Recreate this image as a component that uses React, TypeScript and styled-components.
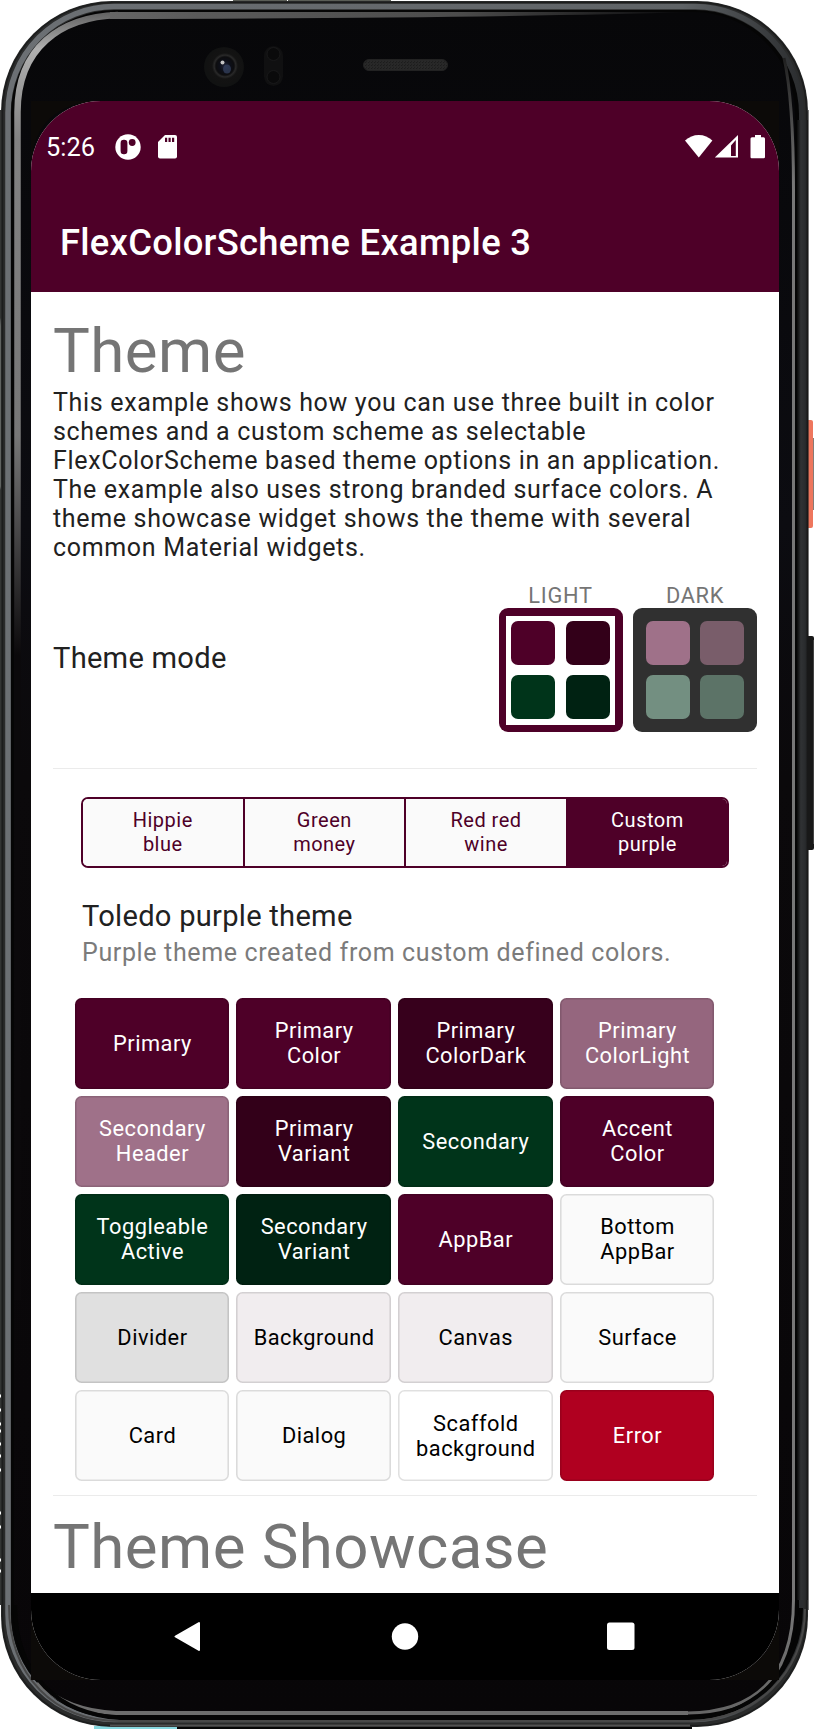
import React from "react";
import styled, { createGlobalStyle } from "styled-components";

const GlobalStyle = createGlobalStyle`
  * { box-sizing: border-box; }
  html, body { margin: 0; background: #fff; }
  body { font-family: Roboto, "Liberation Sans", sans-serif; overflow: hidden; }
`;

const Device = styled.main`
  position: relative;
  width: 815px;
  height: 1729px;
  padding: 101px 36px 49px 31px;
  overflow: hidden;
`;

const FrameArt = styled.svg`
  position: absolute;
  inset: 0;
`;

const Screen = styled.div`
  position: relative;
  display: flex;
  flex-direction: column;
  width: 748px;
  height: 1579px;
  border-radius: 70px;
  overflow: hidden;
  background: #fff;
`;

const TopBar = styled.header`
  height: 191px;
  flex: none;
  background: #4e0028;
  color: #fff;
`;

const StatusBar = styled.div`
  display: flex;
  align-items: center;
  justify-content: space-between;
  height: 91px;
  padding: 0 13px 0 15px;
`;

const StatusGroup = styled.div<{ $gap: number }>`
  display: flex;
  align-items: center;
  gap: ${(p) => p.$gap}px;
`;

const Clock = styled.span`
  width: 52px;
  padding-top: 1px;
  font-size: 25.4px;
  line-height: 30px;
  letter-spacing: 0;
  white-space: nowrap;
`;

const AppTitle = styled.h1`
  margin: 0;
  padding: 29px 0 0 29px;
  font-size: 36.4px;
  font-weight: 500;
  line-height: 44px;
  letter-spacing: 0.27px;
  white-space: nowrap;
`;

const Content = styled.section`
  flex: 1;
  padding: 20px 22px 0;
  overflow: hidden;
`;

const Headline = styled.h2<{ $top?: number }>`
  margin: ${(p) => p.$top ?? 0}px 0 0;
  height: 76px;
  padding-top: 1px;
  font-size: 61.8px;
  font-weight: 400;
  line-height: 76px;
  letter-spacing: 0.45px;
  color: #757575;
  white-space: nowrap;
`;

const Description = styled.p`
  margin: 0;
  font-size: 25px;
  line-height: 29px;
  letter-spacing: 0.67px;
  color: #212121;
  white-space: nowrap;
`;

const ModeRow = styled.div`
  display: flex;
  justify-content: space-between;
  align-items: center;
  height: 206px;
  padding-bottom: 15px;
`;

const Subtitle = styled.h3`
  margin: 0;
  font-size: 29.1px;
  font-weight: 400;
  line-height: 36px;
  letter-spacing: 0.27px;
  color: #212121;
  white-space: nowrap;
`;

const ModeOptions = styled.div`
  display: flex;
  gap: 10.5px;
`;

const ModeOption = styled.div`
  display: flex;
  flex-direction: column;
  align-items: center;
`;

const ModeLabel = styled.span`
  height: 25px;
  font-size: 21.8px;
  line-height: 25px;
  letter-spacing: 0.7px;
  color: #757575;
`;

const Swatches = styled.div<{ $surface: string; $outline: string }>`
  display: grid;
  grid-template-columns: 44px 44px;
  grid-template-rows: 44px 44px;
  place-content: center;
  gap: 10.5px;
  width: 124px;
  height: 124px;
  border-radius: 9px;
  background: linear-gradient(${(p) => p.$surface}, ${(p) => p.$surface}) center / 109px 109px no-repeat
    ${(p) => p.$outline};
`;

const Swatch = styled.div<{ $color: string }>`
  border-radius: 7px;
  background: ${(p) => p.$color};
`;

const Divider = styled.hr<{ $top?: number }>`
  height: 1px;
  margin: ${(p) => p.$top ?? 0}px 0 0;
  border: 0;
  background: #ebebeb;
`;

const SegmentedControl = styled.div`
  display: grid;
  grid-template-columns: 159.5px 161.7px 161.7px 1fr;
  width: 648px;
  height: 71.500px;
  margin: 27.500px 0 0 28px;
  border: 2px solid #4e0028;
  border-radius: 7px;
  overflow: hidden;
`;

const Segment = styled.div<{ $selected?: boolean }>`
  display: flex;
  align-items: center;
  justify-content: center;
  padding-bottom: 1px;
  border-left: 2px solid #4e0028;
  background: ${(p) => (p.$selected ? "#4e0028" : "#fafafa")};
  color: ${(p) => (p.$selected ? "#fff" : "#4e0028")};
  font-size: 20px;
  line-height: 24px;
  letter-spacing: 0.5px;
  text-align: center;
  white-space: pre-line;
  &:first-child { border-left: 0; }
`;

const ThemeInfo = styled.div`
  height: 129.500px;
  padding: 30px 0 0 29px;
`;

const ThemeCaption = styled.p`
  margin: 2px 0 0;
  font-size: 25px;
  line-height: 34px;
  letter-spacing: 0.64px;
  color: #7b7b7b;
  white-space: nowrap;
`;

const Palette = styled.div`
  display: grid;
  grid-template-columns: repeat(4, 154.5px);
  grid-auto-rows: 91px;
  gap: 7.2px;
  padding-left: 21.7px;
`;

const ColorCard = styled.div<{ $color: string; $dark?: boolean }>`
  display: flex;
  align-items: center;
  justify-content: center;
  padding-left: 1px;
  border-radius: 6.5px;
  box-shadow: inset 0 0 0 1.6px rgba(0, 0, 0, 0.12);
  background: ${(p) => p.$color};
  color: ${(p) => (p.$dark ? "#fff" : "#000")};
  font-size: 21.8px;
  line-height: 25px;
  letter-spacing: 0.5px;
  text-align: center;
  white-space: pre-line;
`;

const NavBar = styled.nav`
  display: flex;
  flex: none;
  height: 87px;
  background: #000;
`;

const lightSwatches = ["#4e0028", "#330019", "#00341a", "#002212"];
const darkSwatches = ["#9f7189", "#795d6a", "#738f81", "#5c7367"];

const segments = ["Hippie\nblue", "Green\nmoney", "Red red\nwine", "Custom\npurple"];

const palette: Array<[string, string, boolean]> = [
  ["Primary", "#4e0028", true],
  ["Primary\nColor", "#4e0028", true],
  ["Primary\nColorDark", "#37001c", true],
  ["Primary\nColorLight", "#95667e", true],
  ["Secondary\nHeader", "#9f7189", true],
  ["Primary\nVariant", "#330019", true],
  ["Secondary", "#00341a", true],
  ["Accent\nColor", "#4e0028", true],
  ["Toggleable\nActive", "#00341a", true],
  ["Secondary\nVariant", "#002212", true],
  ["AppBar", "#4e0028", true],
  ["Bottom\nAppBar", "#fafafa", false],
  ["Divider", "#e0e0e0", false],
  ["Background", "#f1edef", false],
  ["Canvas", "#f1edef", false],
  ["Surface", "#fafafa", false],
  ["Card", "#fafafa", false],
  ["Dialog", "#fafafa", false],
  ["Scaffold\nbackground", "#ffffff", false],
  ["Error", "#b00020", true],
];

const PhoneFrame = () => (
  <FrameArt width="815" height="1729" viewBox="0 0 815 1729">
    <defs>
      <linearGradient id="metal" x1="0" y1="0" x2="1" y2="0">
        <stop offset="0" stopColor="#6c7074" />
        <stop offset="0.85" stopColor="#5f6366" />
        <stop offset="1" stopColor="#2b2d2f" />
      </linearGradient>
      <linearGradient id="glint" gradientUnits="userSpaceOnUse" x1="0" y1="10" x2="0" y2="1300">
        <stop offset="0" stopColor="#5c5c5c" />
        <stop offset="0.03" stopColor="#b0b0b0" />
        <stop offset="0.1" stopColor="#828282" />
        <stop offset="0.33" stopColor="#777" />
        <stop offset="0.5" stopColor="#0b090b" />
      </linearGradient>
      <linearGradient id="topGlint" x1="0" y1="0" x2="1" y2="0">
        <stop offset="0" stopColor="#666" />
        <stop offset="0.15" stopColor="#5a5a5a" />
        <stop offset="0.6" stopColor="#4c4c4c" />
        <stop offset="1" stopColor="#08080a" />
      </linearGradient>
      <linearGradient id="sideLine" gradientUnits="userSpaceOnUse" x1="0" y1="50" x2="0" y2="1700">
        <stop offset="0" stopColor="#1a1a1a" />
        <stop offset="0.08" stopColor="#777" />
        <stop offset="0.94" stopColor="#777" />
        <stop offset="1" stopColor="#666" />
      </linearGradient>
      <linearGradient id="rightMetal" x1="0" y1="0" x2="1" y2="0">
        <stop offset="0" stopColor="#0a0a0a" />
        <stop offset="0.35" stopColor="#303234" />
        <stop offset="0.75" stopColor="#292b2d" />
        <stop offset="1" stopColor="#141414" />
      </linearGradient>
      <linearGradient id="glass" x1="0" y1="0" x2="0" y2="1">
        <stop offset="0" stopColor="#070709" />
        <stop offset="0.3" stopColor="#0c0c11" />
        <stop offset="0.45" stopColor="#0b090b" />
        <stop offset="1" stopColor="#080608" />
      </linearGradient>
      <radialGradient id="lens">
        <stop offset="0" stopColor="#20253a" />
        <stop offset="0.3" stopColor="#0d0f18" />
        <stop offset="0.5" stopColor="#0d0d0f" />
        <stop offset="0.6" stopColor="#292929" />
        <stop offset="0.72" stopColor="#131313" />
        <stop offset="1" stopColor="#121212" />
      </radialGradient>
      <pattern id="mesh" width="3" height="3" patternUnits="userSpaceOnUse">
        <rect width="3" height="3" fill="#1c1c1c" />
        <path d="M0 0h1v3M2 1h1v1" stroke="#3a3a3a" strokeWidth="0.8" />
      </pattern>
    </defs>
    <path d="M233 0h54v1h-54zM288 0h103v1H288z" fill="#5a5d56" />
    <rect x="94" y="1726" width="83" height="3" fill="#87d7df" />
    <rect x="177" y="1726" width="515" height="3" fill="#060606" />
    <rect x="0" y="110" width="6" height="1495" fill="#333534" />
    <path d="M0 318q2 3 2 80v72q0 15-2 20z" fill="#606361" />
    <path d="M0 1396h1M0 1410h1M0 1424h1M0 1431h1M0 1444h1M0 1456h1M0 1470h1M0 1513h1M0 1527h1M0 1560h1M0 1571h1" stroke="#fff" strokeWidth="3" />
    <rect x="806" y="420" width="7" height="108" rx="2" fill="#ee765d" />
    <path d="M813.5 438v72" stroke="#867d79" />
    <path d="M808 110h.6v1500h-.6z" fill="#222" />
    <rect x="805" y="636" width="9" height="214" rx="2" fill="#181818" />
    <path d="M813.5 640v204" stroke="#444" />
    <rect x="1" y="1" width="807" height="1726" rx="111" fill="#2a2b2b" />
    <rect x="2.5" y="2.5" width="804" height="1723" rx="109" fill="none" stroke="#1c1d1d" strokeWidth="1.5" />
    <rect x="8" y="6.5" width="793" height="1713" rx="106" fill="none" stroke="url(#metal)" strokeWidth="5.5" />
    <rect x="11" y="10" width="788" height="1708" rx="104" fill="#050505" />
    <rect x="14" y="12" width="781" height="1703" rx="102" fill="url(#glass)" />
    <rect x="797" y="120" width="11" height="1480" fill="url(#rightMetal)" />
    <path d="M17.5 1300V112C17.5 48 60 17 118 15" fill="none" stroke="url(#glint)" strokeWidth="6.5" />
    <path d="M110 12H690Q500 18 110 19Z" fill="url(#topGlint)" />
    <path d="M784 58Q793.500 100 793.500 190V1600q0 112-106 113" fill="none" stroke="url(#sideLine)" strokeWidth="3" />
    <path d="M688 1713H116q-48-2-79-30" fill="none" stroke="#6d6d6d" strokeWidth="4" />
    <path d="M15 1605c0 72 45 109 105 113h569c65 0 112-48 112-110" fill="none" stroke="#050505" strokeWidth="4" />
    <path d="M9 1605c0 72 46 116 110 116h569c67 0 117-48 117-112" fill="none" stroke="#484848" strokeWidth="2" />
    <path d="M110 1725.500h580" stroke="#515151" strokeWidth="2" />
    <path d="M31 165v-64h70q-66 2-70 64M710 101h69v69q-6-62-69-69M31 1610v70h70q-66-8-70-70M710 1680h69v-70q-3 62-69 70" fill="#0c0a08" />
    <circle cx="224" cy="67" r="20" fill="#111212" />
    <circle cx="225" cy="66" r="18" fill="url(#lens)" />
    <ellipse cx="227" cy="69" rx="4" ry="4.500" fill="#34415f" opacity=".75" />
    <circle cx="222.500" cy="62.500" r="2" fill="#c5c5c5" />
    <rect x="264" y="46" width="19" height="40" rx="9.500" fill="#101011" />
    <circle cx="273.500" cy="54" r="6.500" fill="#0a0a0b" stroke="#19191a" />
    <circle cx="273.500" cy="77" r="6.500" fill="#0a0a0b" stroke="#19191a" />
    <rect x="363.500" y="59.500" width="84" height="11" rx="5.500" fill="url(#mesh)" stroke="#222" strokeWidth="1" />
  </FrameArt>
);

const PStatusIcon = () => (
  <svg width="26" height="26" viewBox="0 0 26 26">
    <circle cx="13" cy="13" r="12.7" fill="#fff" />
    <rect x="5.6" y="5.8" width="6.8" height="14.5" rx="3.2" fill="#4e0028" />
    <circle cx="17.2" cy="8.5" r="3.4" fill="#4e0028" />
  </svg>
);

const SdCardIcon = () => (
  <svg width="19" height="24" viewBox="0 0 19 24">
    <path d="M7 0h10a2 2 0 0 1 2 2v19.5a2 2 0 0 1-2 2H2a2 2 0 0 1-2-2V7z" fill="#fff" />
    <path d="M7 2.7h2.2V7H7zM10.5 2.7h2.2V7h-2.2zM14 2.7h2.2V7H14z" fill="#4e0028" />
  </svg>
);

const SignalIcons = () => (
  <svg width="81" height="25" viewBox="0 0 81 25">
    <path d="M0 6.6Q6 1 13.8 1t13.6 5.6L13.8 23.6z" fill="#fff" />
    <path d="M29.8 23.5 53 1v22.5zM46 11.500V22h4.800V6z" fill="#fff" fillRule="evenodd" />
    <path d="M70 1h6v2.3h2.5a1.5 1.5 0 0 1 1.5 1.5V23a1.3 1.3 0 0 1-1.3 1.3H67A1.3 1.3 0 0 1 65.500 23V4.800a1.500 1.500 0 0 1 1.500-1.500h3z" fill="#fff" />
  </svg>
);

const ModeChoice = ({
  label,
  colors,
  surface,
  outline,
}: {
  label: string;
  colors: string[];
  surface: string;
  outline: string;
}) => (
  <ModeOption>
    <ModeLabel>{label}</ModeLabel>
    <Swatches $surface={surface} $outline={outline}>
      {colors.map((c) => (
        <Swatch key={c} $color={c} />
      ))}
    </Swatches>
  </ModeOption>
);

export default function App() {
  return (
    <>
      <GlobalStyle />
      <Device>
        <PhoneFrame />
        <Screen>
          <TopBar>
            <StatusBar>
              <StatusGroup $gap={17}>
                <Clock>5:26</Clock>
                <PStatusIcon />
                <SdCardIcon />
              </StatusGroup>
              <SignalIcons />
            </StatusBar>
            <AppTitle>FlexColorScheme Example 3</AppTitle>
          </TopBar>
          <Content>
            <Headline>Theme</Headline>
            <Description>
              This example shows how you can use three built in color
              <br />
              schemes and a custom scheme as selectable
              <br />
              FlexColorScheme based theme options in an application.
              <br />
              The example also uses strong branded surface colors. A
              <br />
              theme showcase widget shows the theme with several
              <br />
              common Material widgets.
            </Description>
            <ModeRow>
              <Subtitle>Theme mode</Subtitle>
              <ModeOptions>
                <ModeChoice label="LIGHT" colors={lightSwatches} surface="#ffffff" outline="#4e0028" />
                <ModeChoice label="DARK" colors={darkSwatches} surface="#303030" outline="#303030" />
              </ModeOptions>
            </ModeRow>
            <Divider />
            <SegmentedControl>
              {segments.map((s, i) => (
                <Segment key={s} $selected={i === 3}>
                  {s}
                </Segment>
              ))}
            </SegmentedControl>
            <ThemeInfo>
              <Subtitle>Toledo purple theme</Subtitle>
              <ThemeCaption>Purple theme created from custom defined colors.</ThemeCaption>
            </ThemeInfo>
            <Palette>
              {palette.map(([name, color, dark]) => (
                <ColorCard key={name} $color={color} $dark={dark}>
                  {name}
                </ColorCard>
              ))}
            </Palette>
            <Divider $top={14} />
            <Headline $top={12}>Theme Showcase</Headline>
          </Content>
          <NavBar>
            <svg width="748" height="87" viewBox="0 0 748 87">
              <path d="M144.500 43.500 168 30v27z" fill="#fff" stroke="#fff" strokeWidth="2" strokeLinejoin="round" />
              <circle cx="374" cy="43.500" r="13.200" fill="#fff" />
              <rect x="576" y="29.500" width="27.500" height="27.500" rx="2.500" fill="#fff" />
            </svg>
          </NavBar>
        </Screen>
      </Device>
    </>
  );
}
